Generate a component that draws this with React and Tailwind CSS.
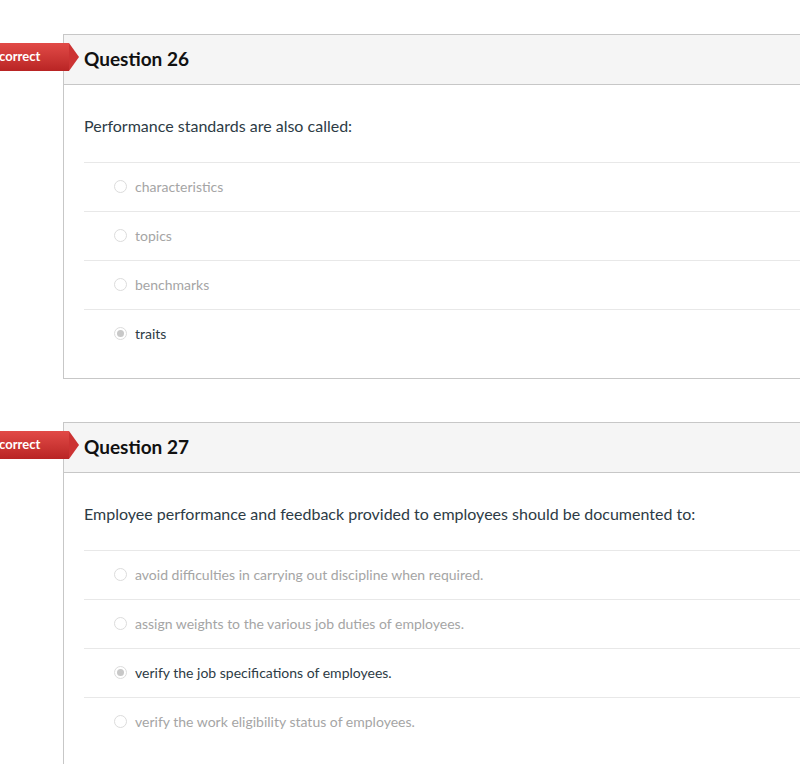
import React from "react";

const questions = [
  {
    n: 26,
    text: "Performance standards are also called:",
    answers: ["characteristics", "topics", "benchmarks", "traits"],
    selected: 3,
  },
  {
    n: 27,
    text: "Employee performance and feedback provided to employees should be documented to:",
    answers: [
      "avoid difficulties in carrying out discipline when required.",
      "assign weights to the various job duties of employees.",
      "verify the job specifications of employees.",
      "verify the work eligibility status of employees.",
    ],
    selected: 2,
  },
];

function Radio({ checked }) {
  return (
    <span className="w-[13px] h-[13px] rounded-full border border-[#dcdcdc] bg-white flex items-center justify-center shrink-0">
      {checked && <span className="w-[7px] h-[7px] rounded-full bg-[#c8c8c8]" />}
    </span>
  );
}

function Question({ q }) {
  return (
    <div className="relative ml-[63px] w-[780px] border border-[#c7c7c7] bg-white">
      <div className="absolute left-[-80px] top-[8px] flex h-[28px]">
        <div className="w-[85px] h-full pl-[4px] flex items-center text-white text-[13px] font-bold bg-gradient-to-b from-[#e24a47] to-[#b92424]">
          Incorrect
        </div>
        <div className="w-0 h-0 border-t-[14px] border-b-[14px] border-l-[10px] border-t-transparent border-b-transparent border-l-[#cc3333]" />
      </div>
      <div className="h-[50px] bg-[#f5f5f5] border-b border-[#c7c7c7] pl-[20px] flex items-center">
        <span className="text-[19px] font-bold text-[#111]">Question {q.n}</span>
      </div>
      <div className="pl-[20px] pt-[29px] pb-[20px]">
        <div className="text-[16px] text-[#2d3b45] h-[48px]">{q.text}</div>
        {q.answers.map((a, i) => (
          <div key={i} className="h-[49px] border-t border-[#e8e8e8] flex items-center gap-[8px] pl-[30px] pb-[2px]">
            <Radio checked={i === q.selected} />
            <span className={"text-[14px] " + (i === q.selected ? "text-[#2d3b45]" : "text-[#a5a5a5]")}>{a}</span>
          </div>
        ))}
      </div>
    </div>
  );
}

export default function App() {
  return (
    <div className="w-[800px] h-[764px] overflow-hidden bg-white pt-[34px] flex flex-col gap-[43px]" style={{ fontFamily: "Lato, 'Open Sans', sans-serif" }}>
      {questions.map((q) => (
        <Question key={q.n} q={q} />
      ))}
    </div>
  );
}
